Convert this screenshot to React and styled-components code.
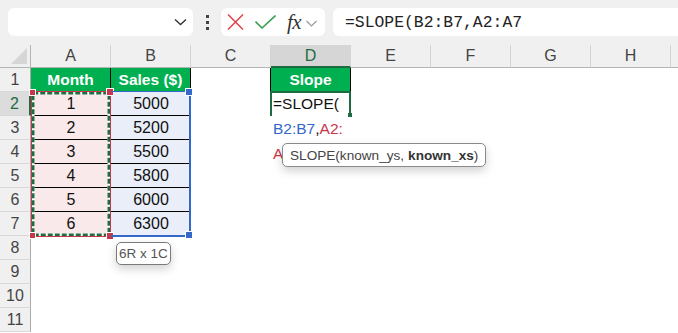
import React from 'react'
import styled, { createGlobalStyle } from 'styled-components';

const GlobalStyle = createGlobalStyle`
  html, body {
    margin: 0;
    padding: 0;
    background: #fff;
    overflow: hidden;
  }
  body {
    font-family: "Liberation Sans", Arial, sans-serif;
  }
`;

// the last column is only a sliver at the window edge, so it gets no label
const COLS = ['A', 'B', 'C', 'D', 'E', 'F', 'G', 'H', ''];
const ROWS = [1, 2, 3, 4, 5, 6, 7, 8, 9, 10, 11];
const MONTHS = [1, 2, 3, 4, 5, 6];
const SALES = [5000, 5200, 5500, 5800, 6000, 6300];

const App = () => {
  return (
    <>
      <GlobalStyle />
      <Toolbar>
        <NameBox>
          <svg width="13" height="8" viewBox="0 0 13 8">
            <path d="M1 1.5 L6.5 6.5 L12 1.5" fill="none" stroke="#333" strokeWidth="1.4" />
          </svg>
        </NameBox>
        <Dots>
          <span /><span /><span />
        </Dots>
        <FxBox>
          <svg width="17" height="16" viewBox="0 0 17 16">
            <path d="M1 0.5 L16 15.5 M16 0.5 L1 15.5" stroke="#e2454b" strokeWidth="1.5" fill="none" />
          </svg>
          <svg width="21" height="14" viewBox="0 0 21 14">
            <path d="M0.5 6.5 L7 13 L20.5 0.5" stroke="#3e9f52" strokeWidth="1.6" fill="none" />
          </svg>
          <FxLabel>fx</FxLabel>
          <svg width="11" height="7" viewBox="0 0 11 7">
            <path d="M0.5 1 L5.5 6 L10.5 1" fill="none" stroke="#9a9a9a" strokeWidth="1.2" />
          </svg>
        </FxBox>
        <FormulaBox>=SLOPE(B2:B7,A2:A7</FormulaBox>
      </Toolbar>

      <Sheet>
        <Corner>
          <svg width="16" height="16" viewBox="0 0 16 16">
            <path d="M16 0 L16 16 L0 16 Z" fill="#d6d6d6" />
          </svg>
        </Corner>
        {COLS.map((c, i) => (
          <ColHead key={i} $col={i + 1} $active={c === 'D'}>{c}</ColHead>
        ))}
        {ROWS.map((r) => (
          <RowHead key={r} $row={r} $active={r === 2}>{r}</RowHead>
        ))}

        <TitleCell $row={1} $col={1}>Month</TitleCell>
        <TitleCell $row={1} $col={2}>Sales ($)</TitleCell>
        <TitleCell $row={1} $col={4}>Slope</TitleCell>

        {MONTHS.map((m, i) => (
          <DataCell key={'a' + m} $row={i + 2} $col={1} $fill="#f9e9ea">{m}</DataCell>
        ))}
        {SALES.map((s, i) => (
          <DataCell key={'b' + s} $row={i + 2} $col={2} $fill="#e9eef8">{s}</DataCell>
        ))}

        <RefRangeA>
          <svg width="80" height="146" viewBox="0 0 80 146">
            <rect x="0.5" y="0.5" width="79" height="145" fill="none" stroke="#c8364a" strokeWidth="1" />
            <rect x="2.25" y="2.25" width="75.5" height="141.5" fill="none" stroke="#fff" strokeWidth="2.5" />
            <rect x="2.25" y="2.25" width="75.5" height="141.5" fill="none" stroke="#1f6b42" strokeWidth="2.5" strokeDasharray="5 2" />
          </svg>
          <Handle $color="#c8364a" $size={5} style={{ left: -2, top: -2 }} />
          <Handle $color="#c8364a" $size={6} style={{ right: -3, top: -3 }} />
          <Handle $color="#c8364a" $size={5} style={{ left: -2, bottom: -2 }} />
          <Handle $color="#c8364a" $size={6} style={{ right: -3, bottom: -3 }} />
        </RefRangeA>

        <RefRangeB>
          <Handle $color="#3468c9" $size={6} style={{ right: -4, top: -4 }} />
          <Handle $color="#3468c9" $size={6} style={{ right: -4, bottom: -4 }} />
        </RefRangeB>

        <ActiveCell>
          <FillHandle />
        </ActiveCell>

        <EditText>
          =SLOPE(<br />
          <Ref $color="#3468c9">B2:B7</Ref>,<Ref $color="#c8364a">A2:</Ref><br />
          <Ref $color="#c8364a">A7</Ref>
          <FnTip>SLOPE(known_ys, <b>known_xs</b>)</FnTip>
        </EditText>

        <SizeTip>6R x 1C</SizeTip>
      </Sheet>
    </>
  )
}

const Toolbar = styled.div`
  height: 45px;
  display: flex;
  align-items: center;
  padding-left: 8px;
  background: #f0f0f0;
  box-sizing: border-box;
`;

const NameBox = styled.div`
  width: 185px;
  height: 28px;
  box-sizing: border-box;
  background: #fff;
  border-radius: 6px;
  display: flex;
  align-items: center;
  justify-content: flex-end;
  padding-right: 6px;
  margin-top: -1px;
`;

const Dots = styled.div`
  width: 28px;
  display: flex;
  flex-direction: column;
  align-items: center;
  gap: 3px;
  margin-top: -1px;

  span {
    width: 3px;
    height: 3px;
    background: #444;
  }
`;

const FxBox = styled.div`
  width: 104px;
  height: 28px;
  box-sizing: border-box;
  background: #fff;
  border-radius: 6px;
  display: flex;
  align-items: center;
  padding-left: 6px;
  gap: 11px;
  margin-top: -1px;

  svg:last-child {
    margin-left: -6px;
    margin-top: 2px;
  }
`;

const FxLabel = styled.span`
  font-family: "Liberation Serif", "DejaVu Serif", serif;
  font-style: italic;
  font-size: 21px;
  color: #333;
  line-height: 1;
  letter-spacing: -0.5px;
`;

const FormulaBox = styled.div`
  flex: 1;
  height: 28px;
  margin-left: 8px;
  margin-top: -1px;
  background: #fff;
  border-radius: 6px 0 0 6px;
  display: flex;
  align-items: center;
  padding-left: 12px;
  font-family: "Liberation Mono", "DejaVu Sans Mono", monospace;
  font-size: 16.4px;
  color: #222;
`;

const Sheet = styled.div`
  display: grid;
  grid-template-columns: 31px repeat(9, 80px);
  grid-template-rows: 23px repeat(11, 24px);
  width: 678px;
  height: 288px;
  overflow: hidden;
`;

const Corner = styled.div`
  grid-row: 1;
  grid-column: 1;
  background: #f0f0f0;
  border-right: 1px solid #b4b4b4;
  border-bottom: 1px solid #b4b4b4;
  box-sizing: border-box;
  display: flex;
  align-items: flex-end;
  justify-content: flex-end;
  padding: 0 3px 3px 0;
`;

const ColHead = styled.div`
  grid-row: 1;
  grid-column: ${p => p.$col + 1};
  box-sizing: border-box;
  background: ${p => (p.$active ? '#d6d6d6' : '#f0f0f0')};
  color: ${p => (p.$active ? '#1e6b41' : '#444')};
  border-right: 1px solid #d4d4d4;
  border-bottom: ${p => (p.$active ? '2px solid #1e6b41' : '1px solid #b4b4b4')};
  display: flex;
  align-items: center;
  justify-content: center;
  font-size: 16px;
  padding-top: ${p => (p.$active ? '1px' : '0')};
`;

const RowHead = styled.div`
  grid-row: ${p => p.$row + 1};
  grid-column: 1;
  box-sizing: border-box;
  background: ${p => (p.$active ? '#dcdcdc' : '#f0f0f0')};
  color: ${p => (p.$active ? '#1e6b41' : '#444')};
  border-bottom: 1px solid #d8d8d8;
  border-right: ${p => (p.$active ? '2px solid #1e6b41' : '1px solid #ababab')};
  display: flex;
  align-items: center;
  justify-content: center;
  font-size: 16px;
`;

const DataCell = styled.div`
  grid-row: ${p => p.$row + 1};
  grid-column: ${p => p.$col + 1};
  box-sizing: border-box;
  background: ${p => p.$fill || '#fff'};
  border-bottom: 1px solid #000;
  display: flex;
  align-items: center;
  justify-content: center;
  font-size: 16px;
  color: #111;
  padding-top: 1px;
`;

const TitleCell = styled(DataCell)`
  background: #00b050;
  color: #fff;
  font-weight: bold;
  font-size: 15.5px;
  border-right: 1px solid #000;
  border-left: ${p => (p.$col === 4 ? '1px solid #000' : 'none')};
  margin-left: ${p => (p.$col === 4 ? '-1px' : '0')};
`;

const RefRangeA = styled.div`
  grid-row: 3 / 9;
  grid-column: 2;
  position: relative;
  margin: -1px 0 -1px 0;
  pointer-events: none;

  svg {
    display: block;
  }
`;

const RefRangeB = styled.div`
  grid-row: 3 / 9;
  grid-column: 3;
  position: relative;
  box-sizing: border-box;
  border-top: 1px solid #3468c9;
  border-right: 2px solid #3468c9;
  border-bottom: 2px solid #3468c9;
  margin: -1px 0 -1px 0;
  pointer-events: none;
`;

const Handle = styled.span`
  position: absolute;
  width: ${p => p.$size}px;
  height: ${p => p.$size}px;
  background: ${p => p.$color};
  border: 1px solid #fff;
`;

const ActiveCell = styled.div`
  grid-row: 3;
  grid-column: 5;
  position: relative;
  box-sizing: border-box;
  border: 2px solid #1e6b41;
  border-bottom: none;
  margin-left: -1px;
  margin-top: -1px;
`;

const FillHandle = styled.span`
  position: absolute;
  right: -3px;
  bottom: -1px;
  width: 4px;
  height: 4px;
  background: #1e6b41;
`;

const EditText = styled.div`
  grid-row: 3 / 6;
  grid-column: 5;
  position: relative;
  padding-left: 2px;
  font-size: 15.5px;
  line-height: 25px;
  color: #111;
  margin-top: -1px;
`;

const Ref = styled.span`
  color: ${p => p.$color};
`;

const FnTip = styled.div`
  position: absolute;
  left: 11px;
  top: 52px;
  height: 24px;
  box-sizing: border-box;
  padding: 0 7px;
  display: flex;
  align-items: center;
  white-space: nowrap;
  background: #fff;
  border: 1px solid #8a8a8a;
  border-radius: 5px;
  box-shadow: 0 4px 10px rgba(0, 0, 0, 0.18);
  font-size: 13.6px;
  color: #444;

  b {
    color: #333;
    margin-left: 4px;
  }
`;

const SizeTip = styled.div`
  grid-row: 9;
  grid-column: 3;
  align-self: start;
  justify-self: start;
  margin: 6px 0 0 5px;
  height: 23px;
  box-sizing: border-box;
  padding: 0 2px;
  display: flex;
  align-items: center;
  white-space: nowrap;
  background: #fff;
  border: 1px solid #7a7a7a;
  border-radius: 5px;
  box-shadow: 0 4px 10px rgba(0, 0, 0, 0.18);
  font-size: 13.5px;
  color: #555;
`;

export default App;
